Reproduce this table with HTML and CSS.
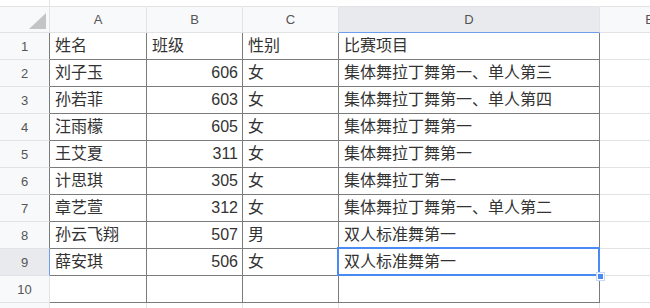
FILE: index.html
```html
<!DOCTYPE html>
<html>
<head>
<meta charset="utf-8">
<link rel="stylesheet" href="styles.css">
</head>
<body>
<div class="sheet">
  <div class="c top rhc"></div><div class="c top"></div><div class="c top"></div><div class="c top"></div><div class="c top"></div><div class="c top"></div>

  <div class="c ch corner"><span class="tri"></span></div>
  <div class="c ch">A</div><div class="c ch">B</div><div class="c ch">C</div><div class="c ch sel">D</div><div class="c ch">E</div>

  <div class="c rh dk">1</div><div class="c d">姓名</div><div class="c d">班级</div><div class="c d">性别</div><div class="c d">比赛项目</div><div class="c"></div>
  <div class="c rh dk">2</div><div class="c d">刘子玉</div><div class="c d n">606</div><div class="c d">女</div><div class="c d">集体舞拉丁舞第一、单人第三</div><div class="c"></div>
  <div class="c rh dk">3</div><div class="c d">孙若菲</div><div class="c d n">603</div><div class="c d">女</div><div class="c d">集体舞拉丁舞第一、单人第四</div><div class="c"></div>
  <div class="c rh dk">4</div><div class="c d">汪雨檬</div><div class="c d n">605</div><div class="c d">女</div><div class="c d">集体舞拉丁舞第一</div><div class="c"></div>
  <div class="c rh dk">5</div><div class="c d">王艾夏</div><div class="c d n">311</div><div class="c d">女</div><div class="c d">集体舞拉丁舞第一</div><div class="c"></div>
  <div class="c rh dk">6</div><div class="c d">计思琪</div><div class="c d n">305</div><div class="c d">女</div><div class="c d">集体舞拉丁第一</div><div class="c"></div>
  <div class="c rh dk">7</div><div class="c d">章艺萱</div><div class="c d n">312</div><div class="c d">女</div><div class="c d">集体舞拉丁舞第一、单人第二</div><div class="c"></div>
  <div class="c rh dk">8</div><div class="c d">孙云飞翔</div><div class="c d n">507</div><div class="c d">男</div><div class="c d">双人标准舞第一</div><div class="c"></div>
  <div class="c rh rsel">9</div><div class="c d">薛安琪</div><div class="c d n">506</div><div class="c d">女</div><div class="c d cur">双人标准舞第一<span class="selbox"></span><span class="handle"></span></div><div class="c"></div>
  <div class="c rh">10</div><div class="c d"></div><div class="c d"></div><div class="c d"></div><div class="c d"></div><div class="c"></div>
  <div class="c rh"></div><div class="c"></div><div class="c"></div><div class="c"></div><div class="c"></div><div class="c"></div>
</div>
</body>
</html>
```

FILE: styles.css
```css
html, body {
  margin: 0;
  padding: 0;
  background: #ffffff;
  overflow: hidden;
}
.sheet {
  display: grid;
  grid-template-columns: 50px 97px 96px 96px 261px 100px;
  grid-template-rows: 7px 26px repeat(10, 27px) 20px;
  width: 700px;
  font-family: "Liberation Sans", "Noto Sans CJK SC", sans-serif;
}
.c {
  box-sizing: border-box;
  border-right: 1px solid #e2e3e5;
  border-bottom: 1px solid #e2e3e5;
  background: #ffffff;
  white-space: nowrap;
  overflow: visible;
}
.top {
  background: #ffffff;
  border-right-color: transparent;
}
.top.rhc {
  border-right-color: #e2e3e5;
}
.ch {
  background: #f8f9fa;
  color: #555555;
  font-size: 13px;
  display: flex;
  align-items: center;
  justify-content: center;
}
.ch.sel {
  background: #e8eaed;
  border-bottom: 1px solid #6d9eeb;
}
.corner {
  position: relative;
}
.tri {
  position: absolute;
  right: 3px;
  bottom: 3px;
  width: 0;
  height: 0;
  border-left: 17px solid transparent;
  border-bottom: 16px solid #c4c4c4;
}
.rh {
  background: #f8f9fa;
  color: #555555;
  font-size: 13px;
  display: flex;
  align-items: center;
  justify-content: center;
}
.rh.dk {
  border-right-color: #7b7b7b;
}
.rh.rsel {
  background: #e8eaed;
  border-right-color: #6d9eeb;
}
.d {
  border-right-color: #7b7b7b;
  border-bottom-color: #7b7b7b;
  color: #333333;
  font-size: 16px;
  line-height: 26px;
  padding-left: 5px;
  overflow: hidden;
}
.d.n {
  text-align: right;
  padding-left: 0;
  padding-right: 4px;
}
.cur {
  position: relative;
  overflow: visible;
}
.selbox {
  position: absolute;
  left: -2px;
  top: -2px;
  right: -1px;
  bottom: -1px;
  border: 2px solid #4a8af4;
  pointer-events: none;
}
.handle {
  position: absolute;
  right: -5px;
  bottom: -5px;
  width: 5px;
  height: 5px;
  background: #4a8af4;
  border: 1px solid #ffffff;
  box-shadow: 0 0 0 1px #c6d9f9;
  z-index: 2;
}
```
